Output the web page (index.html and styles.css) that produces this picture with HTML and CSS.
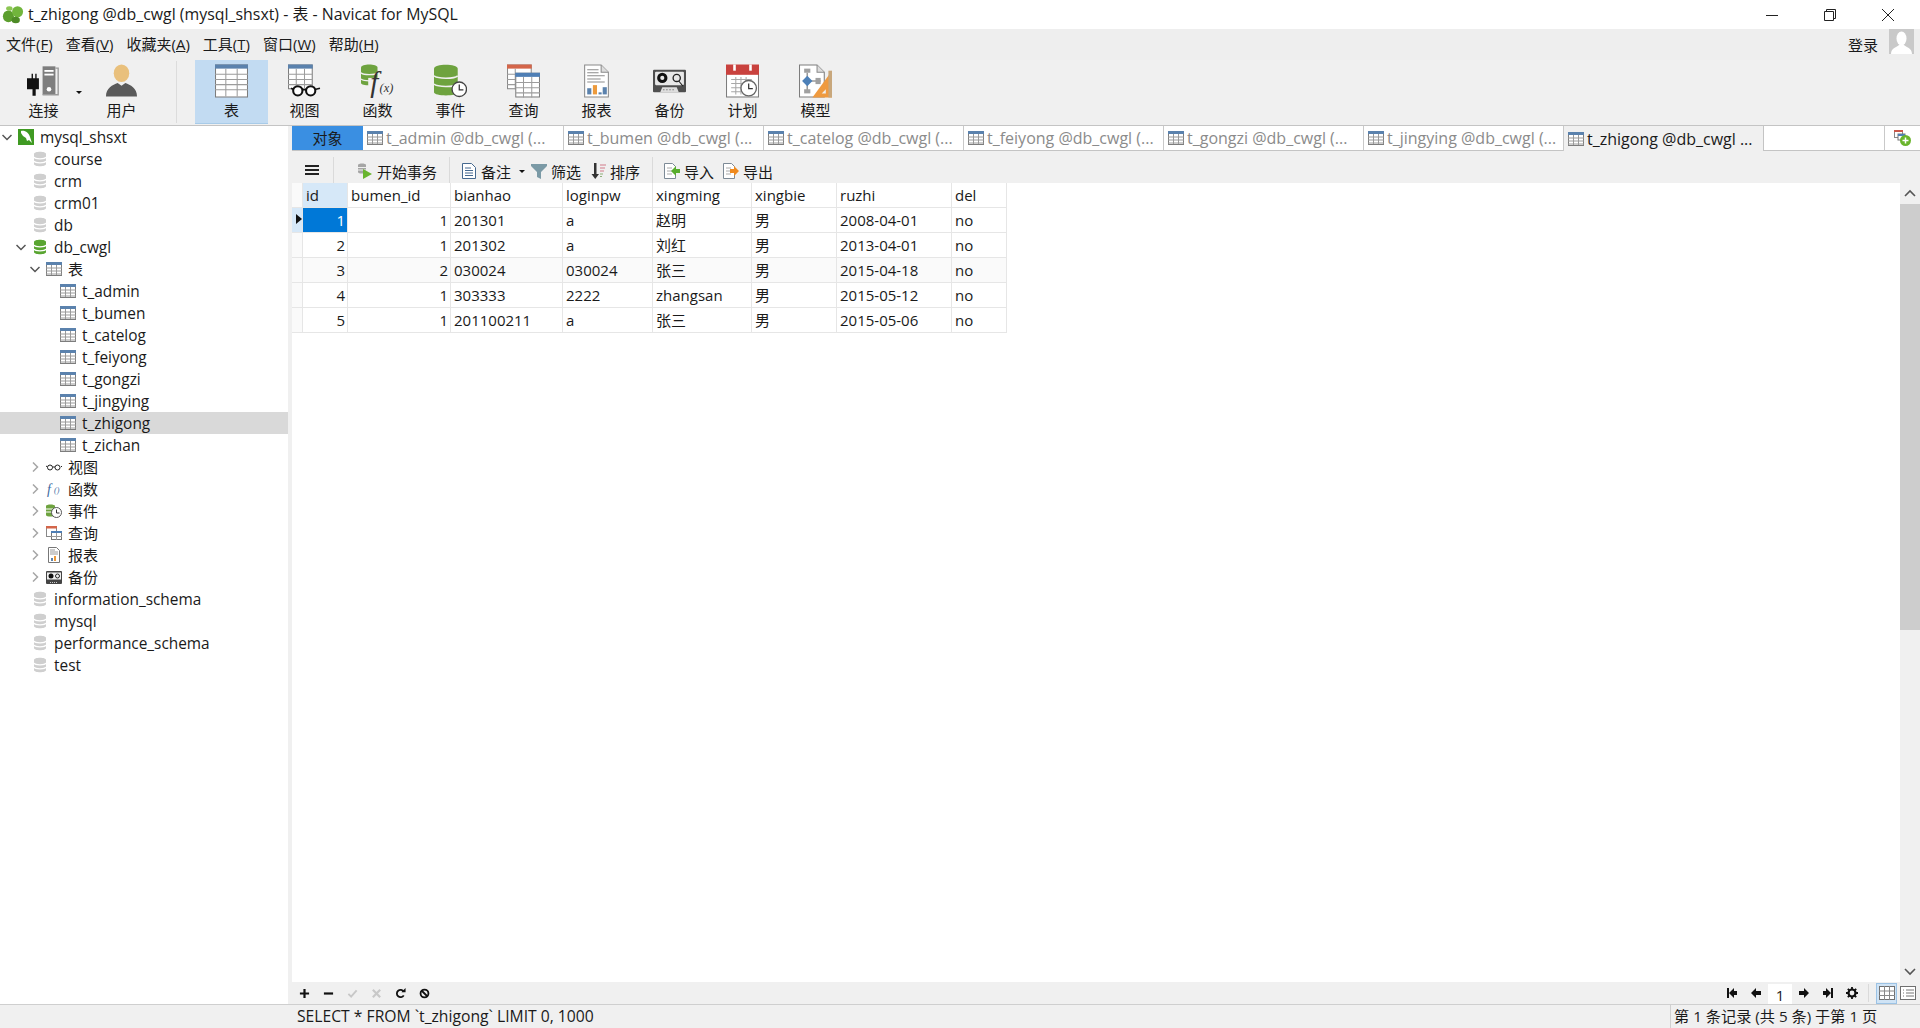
FILE: index.html
```html
<!DOCTYPE html>
<html lang="zh">
<head>
<meta charset="utf-8">
<title>t_zhigong @db_cwgl (mysql_shsxt) - 表 - Navicat for MySQL</title>
<link rel="stylesheet" href="styles.css">
</head>
<body>
<svg class="sprite" xmlns="http://www.w3.org/2000/svg">
  <symbol id="s-table" viewBox="0 0 16 16">
    <rect x="0.5" y="1.5" width="15" height="13" fill="#fff" stroke="#7d7d7d"/>
    <rect x="0" y="1" width="16" height="3" fill="#5b82ad"/>
    <path d="M0 7h16M0 10h16M0 13h16M5.5 4v10M10.5 4v10" stroke="#9a9a9a" fill="none"/>
  </symbol>
  <symbol id="s-db" viewBox="0 0 14 16">
    <path d="M1 3c0-3 12-3 12 0v10c0 3-12 3-12 0z" fill="#cfcfcf"/>
    <path d="M1 6c1 2.400 11 2.400 12 0M1 10c1 2.400 11 2.400 12 0" stroke="#fff" stroke-width="1.300" fill="none"/>
  </symbol>
  <symbol id="s-dbg" viewBox="0 0 14 16">
    <path d="M1 3c0-3 12-3 12 0v10c0 3-12 3-12 0z" fill="#59a531"/>
    <path d="M1 6c1 2.400 11 2.400 12 0M1 10c1 2.400 11 2.400 12 0" stroke="#fff" stroke-width="1.300" fill="none"/>
  </symbol>
  <symbol id="s-chev-d" viewBox="0 0 10 10">
    <path d="M0.500 3l4.500 4.500L9.500 3" fill="none" stroke="#555" stroke-width="1.500"/>
  </symbol>
  <symbol id="s-chev-r" viewBox="0 0 10 10">
    <path d="M3 0.500l4.500 4.500L3 9.500" fill="none" stroke="#a6a6a6" stroke-width="1.500"/>
  </symbol>
</svg>

<div class="app">
  <header class="titlebar">
    <svg class="app-logo" viewBox="0 0 24 20"><ellipse cx="7" cy="12" rx="6" ry="6.500" fill="#5c9e2e"/><ellipse cx="17" cy="7" rx="6" ry="6" fill="#71b53c"/><ellipse cx="15" cy="16" rx="4.500" ry="3.500" fill="#4d8a26"/><ellipse cx="8" cy="3.500" rx="3.500" ry="2.500" fill="#8cc653"/></svg>
    <span class="title-text">t_zhigong @db_cwgl (mysql_shsxt) - 表 - Navicat for MySQL</span>
    <div class="winctl">
      <svg viewBox="0 0 12 12"><path d="M0 6.500h12" stroke="#222"/></svg>
      <svg viewBox="0 0 12 12"><path d="M0.500 2.500h9v9h-9zM2.500 2.500v-2h9v9h-2" fill="none" stroke="#222"/></svg>
      <svg viewBox="0 0 12 12"><path d="M0 0l12 12M12 0L0 12" stroke="#222"/></svg>
    </div>
  </header>

  <nav class="menubar">
    <span>文件(<u>F</u>)</span><span>查看(<u>V</u>)</span><span>收藏夹(<u>A</u>)</span><span>工具(<u>T</u>)</span><span>窗口(<u>W</u>)</span><span>帮助(<u>H</u>)</span>
    <span class="login">登录</span>
    <svg class="avatar" viewBox="0 0 25 25"><rect width="25" height="25" fill="#c9c9c9"/><ellipse cx="12.500" cy="9.500" rx="5" ry="7" fill="#fff"/><path d="M2 25c0-6 6-7 8-9h5c2 2 8 3 8 9z" fill="#fff"/></svg>
  </nav>

  <div class="toolbar">
    <div class="tool tool-conn">
      <svg class="ticon" viewBox="0 0 36 34"><path d="M5 9h1.500v5H9V9h1.500v5H13v12h-3.500v7h-3.500v-7H0V14h5z" fill="#111"/><rect x="17" y="1" width="14" height="31" fill="#7e7e7e"/><path d="M31 3h3v29H17" fill="none" stroke="#9a9a9a" stroke-width="1.500"/><rect x="19" y="5" width="10" height="2" fill="#fff"/><rect x="19" y="9" width="10" height="2" fill="#fff"/><circle cx="24" cy="26" r="2.500" fill="#fff"/></svg>
      <span>连接</span>
    </div>
    <span class="drop"></span>
    <div class="tool">
      <svg class="ticon" viewBox="0 0 34 34"><ellipse cx="17" cy="9" rx="8" ry="9" fill="#e9c07c"/><path d="M1 33c0-9 7-12 12-14l4 3 4-3c5 2 12 5 12 14z" fill="#5a5a5a"/></svg>
      <span>用户</span>
    </div>
    <i class="tool-sep"></i>
    <div class="tool is-active">
      <svg class="ticon" viewBox="0 0 32 32"><rect x="0.500" y="0.500" width="31" height="31" fill="#fff" stroke="#7d7d7d"/><rect width="32" height="4" fill="#5b82ad"/><path d="M0 9.500h32M0 14.500h32M0 19.500h32M0 24.500h32M10.500 4v27M21.500 4v27" stroke="#9c9c9c"/></svg>
      <span>表</span>
    </div>
    <div class="tool">
      <svg class="ticon" viewBox="0 0 32 32"><rect x="0.500" y="0.500" width="23" height="23" fill="#fff" stroke="#7d7d7d"/><rect width="24" height="4" fill="#5b82ad"/><path d="M0 9.500h24M0 14.500h24M0 19.500h24M8 4v20M16 4v20" stroke="#9c9c9c"/><circle cx="9.500" cy="25.500" r="4.500" fill="#fff" stroke="#111" stroke-width="2"/><circle cx="22" cy="25.500" r="4.500" fill="#fff" stroke="#111" stroke-width="2"/><path d="M14 24.500h3.500M3 23l2 1M27 24l4-1" stroke="#111" stroke-width="1.500"/></svg>
      <span>视图</span>
    </div>
    <div class="tool">
      <svg class="ticon" viewBox="0 0 32 32"><path d="M0 3c0-4 16-4 16 0v15c0 3-16 3-16 0z" fill="#6ea33f"/><path d="M0 8c2 2.500 14 2.500 16 0M0 14c2 2.500 14 2.500 16 0" stroke="#f0f0f0" stroke-width="1.300" fill="none"/><path d="M7 13h18v19H7z" fill="#f0f0f0"/><text x="9" y="27" class="svg-fx">f</text><text x="18" y="27" class="svg-fx2">(x)</text></svg>
      <span>函数</span>
    </div>
    <div class="tool">
      <svg class="ticon" viewBox="0 0 32 32"><path d="M0 4c0-5 23-5 23 0v23c0 4-23 4-23 0z" fill="#6ea33f"/><path d="M0 11c3 3 20 3 23 0M0 19c3 3 20 3 23 0" stroke="#f0f0f0" stroke-width="1.500" fill="none"/><circle cx="24.500" cy="24" r="7" fill="#fff" stroke="#444" stroke-width="1.300"/><path d="M24.500 19.500V24.500H28.500" fill="none" stroke="#333" stroke-width="1.200"/></svg>
      <span>事件</span>
    </div>
    <div class="tool">
      <svg class="ticon" viewBox="0 0 32 32"><rect x="0.500" y="0.500" width="23" height="23" fill="#fff" stroke="#8a8a8a"/><rect width="24" height="4" fill="#d4664a"/><path d="M0 9.500h8M0 14.500h8M0 19.500h8M8 4v20" stroke="#9c9c9c"/><rect x="8.500" y="8.500" width="23" height="23" fill="#fff" stroke="#7d7d7d"/><rect x="8" y="8" width="24" height="4" fill="#4f7fb5"/><path d="M8 17.500h24M8 22.500h24M8 27.500h24M16 12v20M24 12v20" stroke="#9c9c9c"/></svg>
      <span>查询</span>
    </div>
    <div class="tool">
      <svg class="ticon" viewBox="0 0 32 32"><path d="M4.500 0.500h16l7 7v24h-23z" fill="#fff" stroke="#8a8a8a"/><path d="M20.500 0.500v7h7" fill="#ddd" stroke="#8a8a8a"/><path d="M7 5h11M7 8h11M7 11h17M7 14h13M7 17h17" stroke="#8c8c8c"/><rect x="7" y="23" width="4" height="6" fill="#5b82ad"/><rect x="12.500" y="20" width="4" height="9" fill="#ec9a3c"/><rect x="18" y="27" width="3" height="2" fill="#5b82ad"/><rect x="22" y="22" width="4" height="7" fill="#5b82ad"/></svg>
      <span>报表</span>
    </div>
    <div class="tool">
      <svg class="ticon" viewBox="0 0 32 32"><path d="M1 5h30a1 1 0 0 1 1 1v20a1 1 0 0 1-1 1H1a1 1 0 0 1-1-1V6a1 1 0 0 1 1-1z" fill="#4f4f4f"/><rect x="2" y="7" width="28" height="13" rx="1" fill="#e8e8e8"/><circle cx="9" cy="13" r="5" fill="#111"/><circle cx="9" cy="13" r="2" fill="#e8e8e8"/><circle cx="23" cy="13" r="3.500" fill="#e8e8e8" stroke="#222" stroke-width="1.300"/><path d="M25 16l4 5" stroke="#222"/><path d="M7 27l2-5h14l2 5z" fill="#ddd"/><path d="M10 24.500h12" stroke="#555" stroke-dasharray="1 2"/></svg>
      <span>备份</span>
    </div>
    <div class="tool">
      <svg class="ticon" viewBox="0 0 32 32"><rect x="0.500" y="6.500" width="31" height="25" fill="#fff" stroke="#7d7d7d"/><rect width="32" height="10" fill="#c9423e"/><rect x="7" y="0" width="2.500" height="6" fill="#fff"/><rect x="22.500" y="0" width="2.500" height="6" fill="#fff"/><path d="M5 14.500h20M5 18.500h20M5 22.500h20M5 26.500h20M9.500 12v17M14.500 12v17M19.500 12v17" stroke="#a8a8a8" fill="none"/><circle cx="22" cy="23" r="7.500" fill="#fff" stroke="#666" stroke-width="1.300"/><path d="M22 18.500V23.500H26" fill="none" stroke="#333" stroke-width="1.200"/></svg>
      <span>计划</span>
    </div>
    <div class="tool">
      <svg class="ticon" viewBox="0 0 32 32"><path d="M0.500 0.500h17l7 7v24H0.500z" fill="#fff" stroke="#7d7d7d"/><path d="M17.500 0.500v7h7" fill="#ddd" stroke="#8a8a8a"/><path d="M8 8v18M8 16h13" stroke="#9a9a9a" stroke-width="1.500"/><rect x="5" y="4" width="6" height="4" fill="#a0a0a0"/><rect x="5" y="24" width="6" height="4" fill="#a0a0a0"/><rect x="16" y="13" width="5" height="6" fill="#a0a0a0"/><path d="M8 11l5 5-5 5-5-5z" fill="#4d80b8"/><path d="M32 6v26H13z" fill="#ef9a3f"/><path d="M28.500 6H32v26h-3.500z" fill="#c8a77c"/><path d="M26 24v4h-4z" fill="#f0f0f0"/></svg>
      <span>模型</span>
    </div>
  </div>

  <main class="main">
    <aside class="tree">
      <div class="node lv0"><svg class="chev"><use href="#s-chev-d"/></svg><svg class="nicon" viewBox="0 0 16 16"><rect width="16" height="16" fill="#3f9a22"/><path d="M3 2c4-1 8 2 9 6l2 6-3-3-2 1-1-3-3-2-2-3z" fill="#fff"/></svg><span>mysql_shsxt</span></div>
      <div class="node lv1"><i class="chev"></i><svg class="nicon"><use href="#s-db"/></svg><span>course</span></div>
      <div class="node lv1"><i class="chev"></i><svg class="nicon"><use href="#s-db"/></svg><span>crm</span></div>
      <div class="node lv1"><i class="chev"></i><svg class="nicon"><use href="#s-db"/></svg><span>crm01</span></div>
      <div class="node lv1"><i class="chev"></i><svg class="nicon"><use href="#s-db"/></svg><span>db</span></div>
      <div class="node lv1"><svg class="chev"><use href="#s-chev-d"/></svg><svg class="nicon"><use href="#s-dbg"/></svg><span>db_cwgl</span></div>
      <div class="node lv2"><svg class="chev"><use href="#s-chev-d"/></svg><svg class="nicon"><use href="#s-table"/></svg><span>表</span></div>
      <div class="node lv3"><svg class="nicon"><use href="#s-table"/></svg><span>t_admin</span></div>
      <div class="node lv3"><svg class="nicon"><use href="#s-table"/></svg><span>t_bumen</span></div>
      <div class="node lv3"><svg class="nicon"><use href="#s-table"/></svg><span>t_catelog</span></div>
      <div class="node lv3"><svg class="nicon"><use href="#s-table"/></svg><span>t_feiyong</span></div>
      <div class="node lv3"><svg class="nicon"><use href="#s-table"/></svg><span>t_gongzi</span></div>
      <div class="node lv3"><svg class="nicon"><use href="#s-table"/></svg><span>t_jingying</span></div>
      <div class="node lv3 is-selected"><svg class="nicon"><use href="#s-table"/></svg><span>t_zhigong</span></div>
      <div class="node lv3"><svg class="nicon"><use href="#s-table"/></svg><span>t_zichan</span></div>
      <div class="node lv2"><svg class="chev"><use href="#s-chev-r"/></svg><svg class="nicon" viewBox="0 0 16 16"><circle cx="4" cy="8.500" r="2.500" fill="none" stroke="#222"/><circle cx="11.500" cy="8.500" r="2.500" fill="none" stroke="#222"/><path d="M6.500 8h2.500M0 7l1.500 1M15 8l1-1" stroke="#222"/></svg><span>视图</span></div>
      <div class="node lv2"><svg class="chev"><use href="#s-chev-r"/></svg><svg class="nicon" viewBox="0 0 16 16"><text x="1" y="13" class="svg-fs">f</text><text x="8" y="12" class="svg-fs2">()</text></svg><span>函数</span></div>
      <div class="node lv2"><svg class="chev"><use href="#s-chev-r"/></svg><svg class="nicon" viewBox="0 0 16 16"><path d="M0 3c0-2 9-2 9 0v9c0 2-9 2-9 0z" fill="#6ea33f"/><path d="M0 6h9M0 9h9" stroke="#fff"/><circle cx="10.500" cy="9.500" r="5" fill="#fff" stroke="#555"/><path d="M10.500 6.500v3.500h3" fill="none" stroke="#333"/></svg><span>事件</span></div>
      <div class="node lv2"><svg class="chev"><use href="#s-chev-r"/></svg><svg class="nicon" viewBox="0 0 16 16"><rect x="0.500" y="1.500" width="10" height="10" fill="#fff" stroke="#888"/><rect y="1" width="11" height="2.500" fill="#d4664a"/><rect x="5.500" y="6.500" width="10" height="8" fill="#fff" stroke="#777"/><rect x="5" y="6" width="11" height="2" fill="#4f7fb5"/><path d="M5 11.500h11M10.500 8v7" stroke="#999"/></svg><span>查询</span></div>
      <div class="node lv2"><svg class="chev"><use href="#s-chev-r"/></svg><svg class="nicon" viewBox="0 0 16 16"><path d="M2.500 0.500h8l3 3v12h-11z" fill="#fff" stroke="#777"/><path d="M4 3h5M4 5h8M4 7h8" stroke="#999"/><rect x="5" y="11" width="2" height="3" fill="#5b82ad"/><rect x="8" y="9" width="2" height="5" fill="#ec9a3c"/></svg><span>报表</span></div>
      <div class="node lv2"><svg class="chev"><use href="#s-chev-r"/></svg><svg class="nicon" viewBox="0 0 16 16"><rect y="2" width="16" height="13" rx="1" fill="#444"/><rect x="1" y="3.500" width="14" height="7" fill="#eee"/><circle cx="5" cy="7" r="2.500" fill="#111"/><circle cx="11.500" cy="7" r="2" fill="#eee" stroke="#222"/><path d="M4 13.500h8" stroke="#ccc" stroke-dasharray="1 1"/></svg><span>备份</span></div>
      <div class="node lv1"><i class="chev"></i><svg class="nicon"><use href="#s-db"/></svg><span>information_schema</span></div>
      <div class="node lv1"><i class="chev"></i><svg class="nicon"><use href="#s-db"/></svg><span>mysql</span></div>
      <div class="node lv1"><i class="chev"></i><svg class="nicon"><use href="#s-db"/></svg><span>performance_schema</span></div>
      <div class="node lv1"><i class="chev"></i><svg class="nicon"><use href="#s-db"/></svg><span>test</span></div>
    </aside>

    <section class="content">
      <div class="tabbar">
        <div class="tab-objects">对象</div>
        <div class="tab"><svg class="nicon"><use href="#s-table"/></svg><span>t_admin @db_cwgl (...</span></div>
        <div class="tab"><svg class="nicon"><use href="#s-table"/></svg><span>t_bumen @db_cwgl (...</span></div>
        <div class="tab"><svg class="nicon"><use href="#s-table"/></svg><span>t_catelog @db_cwgl (...</span></div>
        <div class="tab"><svg class="nicon"><use href="#s-table"/></svg><span>t_feiyong @db_cwgl (...</span></div>
        <div class="tab"><svg class="nicon"><use href="#s-table"/></svg><span>t_gongzi @db_cwgl (...</span></div>
        <div class="tab"><svg class="nicon"><use href="#s-table"/></svg><span>t_jingying @db_cwgl (...</span></div>
        <div class="tab is-current"><svg class="nicon"><use href="#s-table"/></svg><span>t_zhigong @db_cwgl ...</span></div>
        <div class="tab-search"></div>
        <div class="tab-add"><svg viewBox="0 0 17 16"><rect x="0.500" y="0.500" width="8" height="7" fill="#fff" stroke="#888"/><rect width="9" height="2" fill="#c9574a"/><rect x="4" y="4" width="7" height="6" fill="#fff" stroke="#777"/><rect x="4" y="4" width="7" height="2" fill="#4f7fb5"/><circle cx="11.500" cy="10.500" r="5.500" fill="#6ab52c"/><path d="M11.500 7.500v6M8.500 10.500h6" stroke="#fff" stroke-width="1.500"/></svg></div>
      </div>

      <div class="gridbar">
        <svg class="burger" viewBox="0 0 14 10"><path d="M0 1h14M0 5h14M0 9h14" stroke="#222" stroke-width="2"/></svg>
        <i class="bar-sep bs1"></i>
        <div class="gb-item gb-trans"><svg viewBox="0 0 16 16"><path d="M1 2c0-2 8-2 8 0v7c0 2-8 2-8 0z" fill="#a5a5a5"/><path d="M1 4.500h8M1 7h8" stroke="#eee"/><path d="M6 6l9 5-9 5z" fill="#69b52f"/></svg><span>开始事务</span></div>
        <i class="bar-sep bs2"></i>
        <div class="gb-item gb-memo"><svg viewBox="0 0 16 16"><path d="M1.500 0.500h9l4 4v11h-13z" fill="#fff" stroke="#46698f"/><path d="M4 5h6M4 7.500h8M4 10h8M4 12.500h8" stroke="#46698f"/></svg><span>备注</span></div>
        <span class="mini-drop"></span>
        <div class="gb-item gb-filter"><svg viewBox="0 0 16 16"><path d="M0 1h16v2L10 9v7l-4-2V9L0 3z" fill="#7b9aa6"/></svg><span>筛选</span></div>
        <div class="gb-item gb-sort"><svg viewBox="0 0 16 16"><path d="M4 0h2.500v11H9l-3.750 5L1.500 11H4z" fill="#333"/><path d="M10 2h6M10 5h5M10 8h4" stroke="#d27a8a"/><path d="M10 11h3M10 13.500h2" stroke="#8fb07a"/></svg><span>排序</span></div>
        <i class="bar-sep bs3"></i>
        <div class="gb-item gb-import"><svg viewBox="0 0 16 16"><path d="M0.500 0.500h8l3 3v12h-11z" fill="#fff" stroke="#7d8a96"/><path d="M3 5h5M3 8h5M3 11h5" stroke="#aaa"/><path d="M16 6v4h-4v3l-5-5 5-5v3z" fill="#58ad2d"/></svg><span>导入</span></div>
        <div class="gb-item gb-export"><svg viewBox="0 0 16 16"><path d="M0.500 0.500h8l3 3v12h-11z" fill="#fff" stroke="#7d8a96"/><path d="M3 5h5M3 8h5M3 11h5" stroke="#aaa"/><path d="M7 6v4h4v3l5-5-5-5v3z" fill="#ef8a1f"/></svg><span>导出</span></div>
      </div>

      <div class="gridarea">
        <div class="grid">
          <div class="dg-row dg-head">
            <i class="dg-ind"></i><b class="c-key">id</b><b>bumen_id</b><b>bianhao</b><b>loginpw</b><b>xingming</b><b>xingbie</b><b>ruzhi</b><b>del</b>
          </div>
          <div class="dg-row">
            <i class="dg-ind on"></i><b class="num c-sel">1</b><b class="num">1</b><b>201301</b><b>a</b><b>赵明</b><b>男</b><b>2008-04-01</b><b>no</b>
          </div>
          <div class="dg-row">
            <i class="dg-ind"></i><b class="num">2</b><b class="num">1</b><b>201302</b><b>a</b><b>刘红</b><b>男</b><b>2013-04-01</b><b>no</b>
          </div>
          <div class="dg-row alt">
            <i class="dg-ind"></i><b class="num">3</b><b class="num">2</b><b>030024</b><b>030024</b><b>张三</b><b>男</b><b>2015-04-18</b><b>no</b>
          </div>
          <div class="dg-row">
            <i class="dg-ind"></i><b class="num">4</b><b class="num">1</b><b>303333</b><b>2222</b><b>zhangsan</b><b>男</b><b>2015-05-12</b><b>no</b>
          </div>
          <div class="dg-row">
            <i class="dg-ind"></i><b class="num">5</b><b class="num">1</b><b>201100211</b><b>a</b><b>张三</b><b>男</b><b>2015-05-06</b><b>no</b>
          </div>
        </div>
        <div class="vscroll">
          <svg viewBox="0 0 20 21"><path d="M5 13l5-5 5 5" fill="none" stroke="#555" stroke-width="1.600"/></svg>
          <div class="thumb"></div>
          <div class="track"></div>
          <svg viewBox="0 0 20 21"><path d="M5 8l5 5 5-5" fill="none" stroke="#555" stroke-width="1.600"/></svg>
        </div>
      </div>

      <div class="botbar">
        <svg class="b-ic" viewBox="0 0 12 12"><path d="M6 1v10M1 6h10" stroke="#111" stroke-width="2.400"/></svg>
        <svg class="b-ic" viewBox="0 0 12 12"><path d="M1 6h10" stroke="#111" stroke-width="2.400"/></svg>
        <svg class="b-ic" viewBox="0 0 12 12"><path d="M1.500 6.500l3 3 6-7" fill="none" stroke="#c8c8c8" stroke-width="2"/></svg>
        <svg class="b-ic" viewBox="0 0 12 12"><path d="M2 2l8 8M10 2l-8 8" stroke="#c8c8c8" stroke-width="2.400"/></svg>
        <svg class="b-ic" viewBox="0 0 12 12"><path d="M9.500 8a4 4 0 1 1 0-4" fill="none" stroke="#111" stroke-width="2"/><path d="M7 4.500h4.500V0z" fill="#111"/></svg>
        <svg class="b-ic" viewBox="0 0 12 12"><circle cx="6" cy="6" r="4.300" fill="none" stroke="#111" stroke-width="2"/><path d="M3 3l6 6" stroke="#111" stroke-width="2"/></svg>
        <div class="pager">
          <svg class="p-ic" viewBox="0 0 12 12"><path d="M1 1h2v10H1zM3 6l5-5v3h3v4H8v3z" fill="#111"/></svg>
          <svg class="p-ic" viewBox="0 0 12 12"><path d="M1 6l5-5v3h5v4H6v3z" fill="#111"/></svg>
          <div class="page-field">1</div>
          <svg class="p-ic" viewBox="0 0 12 12"><path d="M11 6L6 1v3H1v4h5v3z" fill="#111"/></svg>
          <svg class="p-ic" viewBox="0 0 12 12"><path d="M9 1h2v10H9zM9 6L4 1v3H1v4h3v3z" fill="#111"/></svg>
          <svg class="p-ic" viewBox="0 0 12 12"><circle cx="6" cy="6" r="3.500" fill="none" stroke="#111" stroke-width="2.200"/><path d="M6 0v2.500M6 9.500V12M0 6h2.500M9.500 6H12M1.800 1.800l1.700 1.700M8.500 8.500l1.700 1.700M1.800 10.200l1.700-1.700M8.500 3.500l1.700-1.700" stroke="#111" stroke-width="1.800"/></svg>
          <i class="pg-sep"></i>
          <div class="view-btn on"><svg viewBox="0 0 16 14"><rect x="0.500" y="0.500" width="15" height="13" fill="#fff" stroke="#6f6f6f"/><path d="M0 5h16M0 9.500h16M5.500 0v14M10.500 0v14" stroke="#888"/></svg></div>
          <div class="view-btn"><svg viewBox="0 0 16 14"><rect x="0.500" y="0.500" width="15" height="13" fill="#fff" stroke="#6f6f6f"/><path d="M3 4h1M3 7h1M3 10h1M6 4h8M6 7h8M6 10h8" stroke="#777"/></svg></div>
        </div>
      </div>
    </section>
  </main>

  <footer class="status">
    <div class="st-sql">SELECT * FROM `t_zhigong` LIMIT 0, 1000</div>
    <div class="st-info">第 1 条记录 (共 5 条) 于第 1 页</div>
  </footer>
</div>
</body>
</html>
```

FILE: styles.css
```css
* { box-sizing: border-box; }
html, body { margin: 0; padding: 0; height: 100%; overflow: hidden; }
body {
  font-family: "Open Sans", "Noto Sans CJK SC", sans-serif;
  font-size: 15px;
  color: #1a1a1a;
  background: #f0f0f0;
}
.sprite { display: none; }
.app { display: flex; flex-direction: column; width: 1920px; height: 1028px; }

/* title bar */
.titlebar { flex: 0 0 29px; background: #fff; display: flex; align-items: center; padding-left: 2px; }
.app-logo { width: 22px; height: 19px; }
.title-text { margin: -2px 0 0 4px; font-size: 15.9px; white-space: nowrap; }
.winctl { margin-left: auto; display: flex; gap: 46px; padding-right: 26px; }
.winctl svg { width: 12px; height: 12px; }

/* menu */
.menubar { flex: 0 0 31px; min-height: 0; display: flex; align-items: center; gap: 13px; padding: 0 6px; font-size: 15px; background: #eee; }
.menubar span:not(.login) { position: relative; top: -1px; }
.menubar .login { margin-left: auto; margin-right: -2px; }
.avatar { width: 25px; height: 25px; align-self: flex-start; flex: none; }

/* main toolbar */
.toolbar { flex: 0 0 66px; min-height: 0; display: flex; align-items: stretch; padding-left: 7px; background: #f0f0f0; border-bottom: 1px solid #c4c4c4; padding-bottom: 1px; }
.tool { width: 73px; display: flex; flex-direction: column; align-items: center; padding-top: 4px; font-size: 15px; }
.tool span { margin-top: 1px; line-height: 22px; }
.ticon { width: 33px; height: 34px; flex: none; }
.drop { width: 0; height: 0; box-sizing: content-box; align-self: flex-start; margin: 31px 3px 0 -4px; border-top: 3px solid #111; border-left: 3px solid transparent; border-right: 3px solid transparent; }
.tool-sep { width: 1px; background: #dcdcdc; margin: 1px 18px 1px 18px; }
.tool.is-active { background: #c2dbf2; border-bottom: 1px solid #a8cbe8; }

/* layout */
.main { flex: 1 1 0; min-height: 0; display: flex; }
.tree { flex: 0 0 288px; background: #fff; }
.node { height: 22px; display: flex; align-items: center; font-size: 15.4px; white-space: nowrap; }
.chev { width: 10px; height: 10px; margin-right: 4px; flex: none; display: block; }
.nicon { width: 16px; height: 16px; flex: none; margin: 0 6px 0 2px; }
.lv0 { padding-left: 2px; }
.lv1 { padding-left: 16px; }
.lv2 { padding-left: 30px; font-size: 15px; }
.lv2 span { margin-top: -2px; }
.lv3 { padding-left: 58px; }
.node.is-selected { background: #d9d9d9; }

.content { flex: 1 1 0; min-width: 0; margin-left: 4px; display: flex; flex-direction: column; }

/* tabs */
.tabbar { flex: 0 0 25px; display: flex; background: #fff; border-bottom: 1px solid #c4c4c4; }
.tab-objects { width: 71px; flex: none; background: #3a8fe2; text-align: center; font-size: 15px; line-height: 24px; }
.tab { width: 200px; flex: none; display: flex; align-items: center; padding-left: 2px; font-size: 16px; color: #8b8b8b; white-space: nowrap; position: relative; }
.tab .nicon { margin: 0 3px 0 2px; }
.tab + .tab { border-left: 1px solid #c9c9c9; }
.tab.is-current { background: #f0f0f0; color: #1a1a1a; margin-bottom: -1px; z-index: 1; }
.tab-search { width: 121px; flex: none; border-left: 1px solid #c4c4c4; background: #fff; }
.tab-add { flex: 1; border-left: 1px solid #c9c9c9; display: flex; align-items: center; justify-content: center; background: #fff; }
.tab-add svg { width: 17px; height: 16px; }

/* grid toolbar */
.gridbar { flex: 0 0 32px; min-height: 0; display: flex; align-items: center; padding-top: 8px; font-size: 15px; background: #f0f0f0; }
.burger { width: 14px; height: 10px; margin: -3px 0 0 13px; flex: none; }
.bar-sep { width: 1px; height: 26px; background: #dadada; flex: none; align-self: flex-end; }
.bs1 { margin: -2px 23px 0 14px; }
.bs2 { margin: -2px 11px 0 12px; }
.bs3 { margin: -2px 11px 0 12px; }
.gb-item { display: flex; align-items: center; gap: 4px; flex: none; white-space: nowrap; height: 22px; }
.gb-item svg { width: 16px; height: 16px; flex: none; }
.mini-drop { width: 0; height: 0; border-top: 3px solid #111; border-left: 3px solid transparent; border-right: 3px solid transparent; margin: 0 6px 0 8px; flex: none; }
.gb-sort { margin-left: 9px; }
.gb-export { margin-left: 9px; }

/* data grid */
.gridarea { flex: 1 1 0; min-height: 0; display: flex; background: #fff; }
.grid { flex: 1; min-width: 0; }
.dg-row { display: grid; grid-template-columns: 11px 45px 103px 112px 90px 99px 85px 115px 55px; width: 715px; height: 25px; border-bottom: 1px solid #e6e6e6; font-size: 15px; line-height: 24px; }
.dg-row b { font-weight: 400; padding: 0 3px; border-right: 1px solid #e6e6e6; white-space: nowrap; overflow: hidden; }
.dg-row .num { text-align: right; padding-right: 2px; }
.dg-ind { background: #fafafa; border-right: 1px solid #e6e6e6; display: block; position: relative; }
.dg-ind.on { background: #d6e8f8; }
.dg-ind.on::after { content: ""; position: absolute; left: 4px; top: 6px; border-left: 6px solid #111; border-top: 5px solid transparent; border-bottom: 5px solid transparent; }
.dg-row .c-key { background: #d6e8f8; }
.dg-row .c-sel { background: #0078d7; color: #fff; }
.dg-row.alt { background: #fafafa; }

.vscroll { flex: 0 0 20px; display: flex; flex-direction: column; background: #f0f0f0; }
.vscroll svg { width: 20px; height: 21px; flex: none; }
.thumb { height: 426px; flex: none; background: #cdcdcd; }
.track { flex: 1; }

/* bottom bar */
.botbar { flex: 0 0 22px; display: flex; align-items: center; padding-left: 7px; background: #f0f0f0; gap: 13px; }
.b-ic { width: 11px; height: 11px; flex: none; }
.pager { margin-left: auto; display: flex; align-items: center; height: 22px; font-size: 15px; padding-right: 2px; }
.p-ic { width: 12px; height: 12px; margin: 0 6px; flex: none; }
.page-field { width: 24px; height: 20px; margin: 2px 0 0 0; background: #fff; text-align: center; line-height: 22px; flex: none; }
.pg-sep { width: 1px; height: 18px; background: #dadada; margin: 0 7px 0 4px; flex: none; }
.view-btn { width: 21px; height: 21px; display: flex; align-items: center; justify-content: center; border: 1px solid transparent; flex: none; }
.view-btn.on { background: #cfe3f5; border-color: #9cc3e5; }
.view-btn svg { width: 16px; height: 14px; }

/* status */
.status { flex: 0 0 24px; display: flex; border-top: 1px solid #cfcfcf; line-height: 23px; background: #f0f0f0; }
.st-sql { flex: 1; padding-left: 5px; margin-left: 292px; font-size: 15.7px; }
.st-info { flex: 0 0 250px; padding-left: 3px; border-left: 1px solid #d0d0d0; font-size: 15.2px; }

/* svg text */
.svg-fx { font: italic 28px "Liberation Serif", serif; fill: #333; }
.svg-fx2 { font: italic 12px "Liberation Serif", serif; fill: #333; }
.svg-fs { font: italic 14px "Liberation Serif", serif; fill: #3c6aa0; }
.svg-fs2 { font: italic 8px "Liberation Serif", serif; fill: #3c6aa0; }
```
